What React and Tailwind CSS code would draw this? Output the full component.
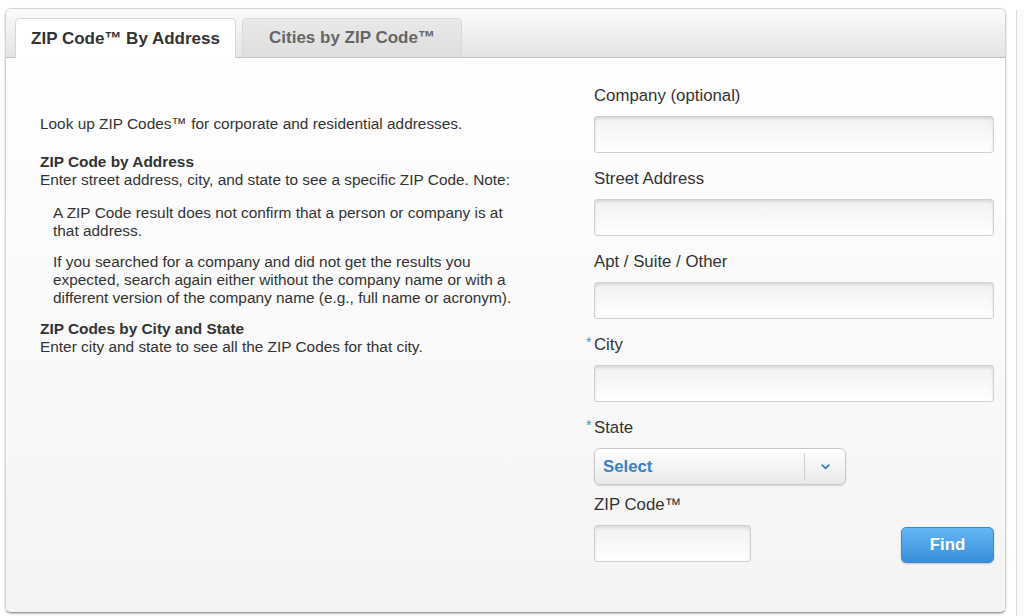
import React from "react";

const font = { fontFamily: '"Liberation Sans", Arial, Helvetica, sans-serif' };

function TextInput({ w = "w-[400px]" }) {
  return (
    <div
      className={`${w} h-[37px] rounded-[3px] border border-[#cfcfcf] bg-gradient-to-b from-[#f1f1f1] to-white shadow-[inset_0_2px_3px_rgba(0,0,0,0.10)]`}
    />
  );
}

function Label({ children, req }) {
  return (
    <div className="relative h-5 mb-[10px] text-[16.8px] leading-5 text-[#333]">
      {req && (
        <span className="absolute -left-[8px] -top-px text-[14px] leading-4 text-[#4a8cc8]">*</span>
      )}
      {children}
    </div>
  );
}

export default function App() {
  return (
    <div className="w-[1024px] h-[616px] bg-white overflow-hidden flex" style={font}>
      <div className="ml-[5px] mt-[8px] w-[1001px] h-[605px] rounded-[6px] border border-[#d3d3d3] border-b-[#9a9a9a] shadow-[0_1px_2px_rgba(0,0,0,0.25)] flex flex-col overflow-hidden">
        {/* header with tabs */}
        <div className="h-[49px] shrink-0 flex items-end gap-[6px] pl-[9px] bg-gradient-to-b from-[#fbfbfb] to-[#e4e4e4] border-b border-[#c2c2c2]">
          <div className="relative top-px w-[221px] h-[40px] rounded-t-[5px] border border-b-0 border-[#d6d6d6] bg-white flex items-center justify-center text-[17px] font-bold text-[#333]">
            ZIP Code™ By Address
          </div>
          <div className="w-[220px] h-[39px] rounded-t-[5px] border border-b-0 border-[#d9d9d9] bg-gradient-to-b from-[#e9e9e9] to-[#dedede] flex items-center justify-center text-[17px] font-bold text-[#666]">
            Cities by ZIP Code™
          </div>
        </div>

        {/* body */}
        <div className="flex-1 flex bg-gradient-to-b from-white to-[#f4f4f4]">
          <div className="w-[554px] ml-[34px] pt-[57px] text-[15.4px] leading-[18px] text-[#333]">
            <p className="mb-[20px]">Look up ZIP Codes™ for corporate and residential addresses.</p>
            <p className="font-bold">ZIP Code by Address</p>
            <p>Enter street address, city, and state to see a specific ZIP Code. Note:</p>
            <p className="mt-[15px] ml-[13px] w-[472px]">
              A ZIP Code result does not confirm that a person or company is at that address.
            </p>
            <p className="mt-[13px] ml-[13px] w-[472px]">
              If you searched for a company and did not get the results you expected, search again either without the company name or with a different version of the company name (e.g., full name or acronym).
            </p>
            <p className="mt-[13px] font-bold">ZIP Codes by City and State</p>
            <p>Enter city and state to see all the ZIP Codes for that city.</p>
          </div>

          <div className="w-[400px] pt-[28px] flex flex-col">
            <Label>Company (optional)</Label>
            <div className="mb-4"><TextInput /></div>
            <Label>Street Address</Label>
            <div className="mb-4"><TextInput /></div>
            <Label>Apt / Suite / Other</Label>
            <div className="mb-4"><TextInput /></div>
            <Label req>City</Label>
            <div className="mb-4"><TextInput /></div>
            <Label req>State</Label>
            <div className="mb-[10px] w-[252px] h-[37px] rounded-[6px] border border-[#c9c9c9] bg-gradient-to-b from-white to-[#e9e9e9] shadow-[0_1px_2px_rgba(0,0,0,0.15)] flex items-center">
              <span className="flex-1 pl-[8px] text-[16.8px] font-bold text-[#3b7fc4]">Select</span>
              <div className="w-px h-[28px] bg-[#cfcfcf]" />
              <div className="w-[40px] flex items-center justify-center">
                <svg width="9" height="6" viewBox="0 0 9 6">
                  <path d="M1.2 1.2 L4.5 4.4 L7.8 1.2" fill="none" stroke="#3b7fc4" strokeWidth="1.8" strokeLinecap="round" strokeLinejoin="round" />
                </svg>
              </div>
            </div>
            <Label>ZIP Code™</Label>
            <div className="flex items-start">
              <TextInput w="w-[157px]" />
              <div className="ml-auto mt-[2px] w-[93px] h-[36px] rounded-[5px] bg-gradient-to-b from-[#64b6f4] to-[#3a8fda] border border-[#3a8ad0] shadow-[0_1px_2px_rgba(0,0,0,0.2)] flex items-center justify-center text-[16.8px] font-bold text-white">
                Find
              </div>
            </div>
          </div>
        </div>
      </div>
      <div className="ml-[10px] mt-[10px] flex-1 h-[606px] border-l border-[#dedede] bg-[#fafafa]" />
    </div>
  );
}
